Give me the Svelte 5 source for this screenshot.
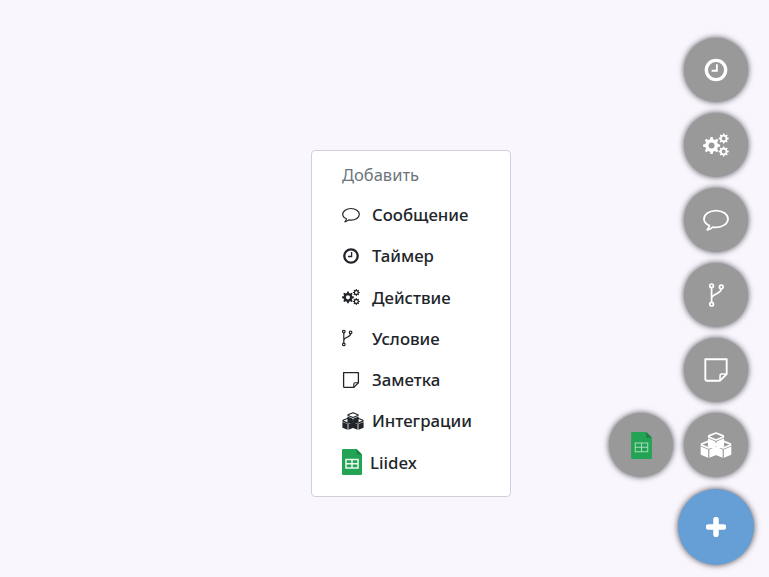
<script>
  const items = [
    { name: "chat", label: "Сообщение" },
    { name: "clock", label: "Таймер" },
    { name: "gears", label: "Действие" },
    { name: "branch", label: "Условие" },
    { name: "note", label: "Заметка" },
    { name: "cubes", label: "Интеграции" }
  ];
  const stack = ["clock", "gears", "chat", "branch", "note", "cubes"];

  // gear outline with a round hole, filled evenodd
  function gear(cx, cy, outer, root, hole, teeth) {
    const step = (Math.PI * 2) / teeth;
    const pt = (r, a) => `${(cx + r * Math.cos(a)).toFixed(2)} ${(cy + r * Math.sin(a)).toFixed(2)}`;
    let d = "";
    for (let i = 0; i < teeth; i++) {
      const a = i * step;
      d += `${i ? "L" : "M"}${pt(root, a - step * 0.3)}L${pt(outer, a - step * 0.17)}L${pt(outer, a + step * 0.17)}L${pt(root, a + step * 0.3)}`;
    }
    d += `ZM${cx - hole} ${cy}a${hole} ${hole} 0 1 0 ${hole * 2} 0a${hole} ${hole} 0 1 0 ${-hole * 2} 0Z`;
    return d;
  }
  const gears = gear(6.6, 9.4, 6.6, 5, 2.3, 8) + gear(15.9, 4, 3.9, 2.9, 1.5, 8) + gear(15.9, 14, 3.9, 2.9, 1.5, 8);
</script>

{#snippet cube(x, y)}
  <path d="M{x} {y}l5 2v.8l-5 2-5-2v-.8z" fill="none" stroke="currentColor" stroke-width="1.200" stroke-linejoin="round" />
  <path d="M{x - 5.600} {y + 3.700}l5.200 2.100v5.700l-5.200-2.100zM{x + 5.600} {y + 3.700}l-5.200 2.100v5.700l5.200-2.100z" fill="currentColor" />
{/snippet}

{#snippet icon(name)}
  {#if name === "chat"}
    <svg viewBox="0 0 18 16" class="ico">
      <path d="M4.400 11.800C2.200 10.900.7 9.300.7 7.300.700 4.100 4.400 1.500 9 1.500s8.300 2.600 8.300 5.800-3.700 5.800-8.300 5.800c-.8 0-1.600-.1-2.300-.2-1 .9-2.200 1.600-3.800 1.900.7-.7 1.300-1.500 1.500-3z" fill="none" stroke="currentColor" stroke-width="1.200" stroke-linejoin="round" />
    </svg>
  {:else if name === "clock"}
    <svg viewBox="0 0 18 18" class="ico">
      <circle cx="9" cy="9" r="6.700" fill="none" stroke="currentColor" stroke-width="2.300" />
      <path d="M9.600 5v4.500H6" fill="none" stroke="currentColor" stroke-width="1.300" />
    </svg>
  {:else if name === "gears"}
    <svg viewBox="0 0 20 18" class="ico">
      <path d={gears} fill="currentColor" fill-rule="evenodd" />
    </svg>
  {:else if name === "branch"}
    <svg viewBox="3.200 0 10.500 18" class="ico narrow">
      <g fill="none" stroke="currentColor" stroke-width="1.200">
        <circle cx="5" cy="2.600" r="1.300" />
        <circle cx="5" cy="15.400" r="1.300" />
        <circle cx="11.800" cy="3.400" r="1.300" />
        <path d="M5 3.900v10.200M11.800 4.700c0 3.800-6.800 3.400-6.800 6.800" />
      </g>
    </svg>
  {:else if name === "note"}
    <svg viewBox="0 0 18 18" class="ico">
      <path d="M1.600 1.600h14.800v10.200l-4.600 4.600H2.600a1 1 0 0 1-1-1z" fill="none" stroke="currentColor" stroke-width="1.300" stroke-linejoin="round" />
      <path d="M16.400 11.800h-3.400a1.200 1.200 0 0 0-1.200 1.200v3.400" fill="none" stroke="currentColor" stroke-width="1.100" />
    </svg>
  {:else if name === "cubes"}
    <svg viewBox="0 0 22 18" class="ico wide">
      {@render cube(11, 0.700)}
      {@render cube(6, 6.300)}
      {@render cube(16, 6.300)}
    </svg>
  {/if}
{/snippet}

{#snippet sheet(cls)}
  <svg viewBox="0 0 20 26" class={cls}>
    <path d="M1 0h13.500L20 5.500V25a1 1 0 0 1-1 1H1a1 1 0 0 1-1-1V1a1 1 0 0 1 1-1z" fill="#23a455" />
    <path d="M14.500 0L20 5.500h-4.500a1 1 0 0 1-1-1z" fill="#178043" />
    <path class="grid" d="M4 10.500h12v8.500H4zM10 10.500v8.500M4 14.700h12" fill="none" stroke="#eef8f1" />
  </svg>
{/snippet}

<div class="page">
  <div class="menu">
    <div class="head">Добавить</div>
    {#each items as item}
      <div class="row">
        <span class="slot">{@render icon(item.name)}</span>
        <span>{item.label}</span>
      </div>
    {/each}
    <div class="row last">
      {@render sheet("sheet")}
      <span>Liidex</span>
    </div>
  </div>

  <div class="fabs">
    {#each stack as name}
      <div class="fab-row">
        {#if name === "cubes"}
          <button class="fab extra">{@render sheet("sheet-fab")}</button>
        {/if}
        <button class="fab">{@render icon(name)}</button>
      </div>
    {/each}
    <button class="add">
      <svg viewBox="0 0 20 20" width="20" height="20">
        <path d="M10 2.500v15M2.500 10h15" stroke="#fff" stroke-width="5.500" stroke-linecap="round" fill="none" />
      </svg>
    </button>
  </div>
</div>

<style>
  :global(body) {
    background: #f9f6fe;
  }

  .page {
    position: relative;
    height: 577px;
    overflow: hidden;
    display: flex;
    align-items: flex-start;
    padding: 150px 0 0 311px;
    box-sizing: border-box;
    font-family: "Noto Sans", "Open Sans", sans-serif;
    color: #212529;
  }

  .menu {
    width: 200px;
    height: 347px;
    box-sizing: border-box;
    padding: 4px 0 0 30px;
    background: #fff;
    border: 1px solid #d4cfdc;
    border-radius: 4px;
    font-size: 16.800px;
    font-weight: 500;
  }

  .head {
    height: 39.100px;
    line-height: 39px;
    color: #6c757d;
    font-size: 16.500px;
    font-weight: 400;
  }

  .row {
    display: flex;
    align-items: center;
    height: 41.250px;
  }

  .slot {
    width: 30px;
    display: flex;
    flex: none;
  }

  .last {
    gap: 8px;
  }

  .ico {
    width: 18px;
    height: 18px;
    display: block;
  }

  .ico.wide {
    width: 22px;
  }

  .ico.narrow {
    width: 10.500px;
  }

  .sheet {
    width: 20px;
    height: 26px;
  }

  .sheet .grid {
    stroke-width: 1.500;
  }

  .fabs {
    position: absolute;
    top: 38px;
    right: 21px;
    display: flex;
    flex-direction: column;
    align-items: flex-end;
    gap: 11px;
  }

  .fab-row {
    display: flex;
    gap: 11px;
  }

  .fab, .add {
    border: 0;
    padding: 0;
    border-radius: 50%;
    display: flex;
    align-items: center;
    justify-content: center;
    color: #fff;
    box-shadow: 0 0 6px rgba(0, 0, 0, 0.7);
  }

  .fab {
    width: 64px;
    height: 64px;
    background: #999;
  }

  .fab .ico {
    width: 26px;
    height: 26px;
  }

  .fab .ico.wide {
    width: 32px;
  }

  .fab .ico.narrow {
    width: 15px;
  }

  .sheet-fab {
    width: 23px;
    height: 27px;
  }

  .sheet-fab .grid {
    stroke-width: 1;
    opacity: 0.65;
  }

  .add {
    width: 76px;
    height: 76px;
    margin: 1px -6px 0 0;
    background: #659fd6;
  }
</style>
